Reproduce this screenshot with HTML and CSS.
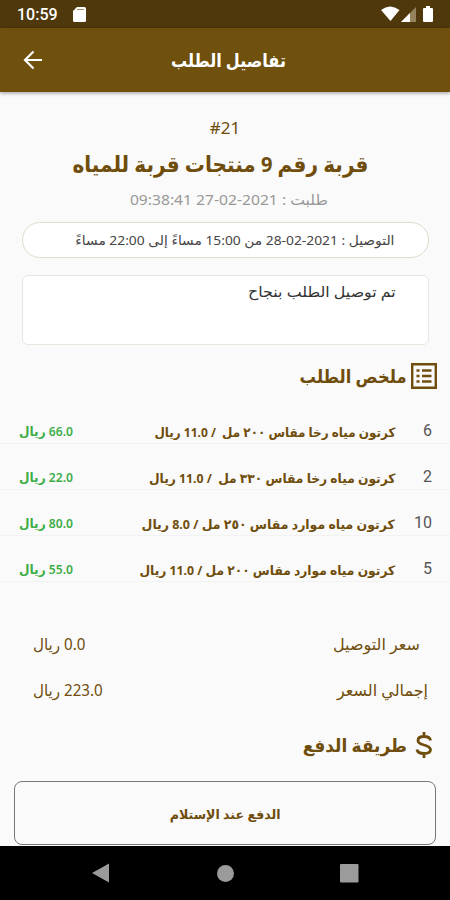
FILE: index.html
```
<!DOCTYPE html>
<html lang="ar" dir="rtl">
<head>
<meta charset="utf-8">
<title>تفاصيل الطلب</title>
<link rel="stylesheet" href="styles.css">
</head>
<body>
<div class="screen">
  <div class="status" dir="ltr">
    <span class="clock">10:59</span>
    <svg class="sd" width="13" height="15" viewBox="0 0 13 15"><path d="M4 0H11.500Q13 0 13 1.500V13.500Q13 15 11.500 15H1.500Q0 15 0 13.500V4Z" fill="#fff"/><path d="M4 2.500h7" stroke="#a2916b"/></svg>
    <svg class="signals" width="54" height="17" viewBox="0 0 54 17"><path d="M0 4Q9 -3 18.500 4L9.500 15Z" fill="#fff"/><path d="M20 16 35 1V16Z" fill="#94835d"/><path d="M20 16 29 7V16Z" fill="#fff"/><path d="M42 3Q42 2 43 2H45V0H49V2H51Q52 2 52 3V15Q52 16 51 16H43Q42 16 42 15Z" fill="#fff"/></svg>
  </div>
  <header class="appbar" dir="ltr">
    <svg class="back" width="20" height="20" viewBox="0 0 20 20" fill="none" stroke="#fff" stroke-width="2.200"><path d="M19 10H2M10.500 1.500 2 10l8.500 8.500"/></svg>
    <h1 class="t" dir="rtl">تفاصيل الطلب</h1>
  </header>
  <main>
    <div class="num"><span class="t" dir="ltr">#21</span></div>
    <h2 class="name"><span class="t">قربة رقم 9 منتجات قربة للمياه</span></h2>
    <div class="date"><span class="t">طلبت : 2021-02-27 09:38:41</span></div>
    <div class="pill"><span class="t">التوصيل : 2021-02-28 من 15:00 مساءً إلى 22:00 مساءً</span></div>
    <div class="note"><span class="t">تم توصيل الطلب بنجاح</span></div>
    <h3 class="section"><svg width="26" height="26" viewBox="0 0 26 26" fill="none" stroke="#6f4d0c" stroke-width="2.400"><path d="M1.200 1.200h23.600v23.600H1.200ZM5.500 7.500h3M5.500 13h3M5.500 18.500h3M11 7.500h9.500M11 13h9.500M11 18.500h9.500"/></svg><span class="t">ملخص الطلب</span></h3>
    <div class="items">
      <div class="item"><span class="qty">6</span><span class="t desc snug">كرتون مياه رخا مقاس ٢٠٠ مل &nbsp;/ 11.0 ريال</span><span class="t price">66.0 ريال</span></div>
      <div class="item"><span class="qty">2</span><span class="t desc">كرتون مياه رخا مقاس ٣٣٠ مل &nbsp;/ 11.0 ريال</span><span class="t price">22.0 ريال</span></div>
      <div class="item"><span class="qty">10</span><span class="t desc wide">كرتون مياه موارد مقاس ٢٥٠ مل / 8.0 ريال</span><span class="t price">80.0 ريال</span></div>
      <div class="item"><span class="qty">5</span><span class="t desc">كرتون مياه موارد مقاس ٢٠٠ مل / 11.0 ريال</span><span class="t price">55.0 ريال</span></div>
    </div>
    <div class="sum ship"><span class="t">سعر التوصيل</span><span class="t amount">0.0 ريال</span></div>
    <div class="sum"><span class="t">إجمالي السعر</span><span class="t amount">223.0 ريال</span></div>
    <h3 class="section pay"><svg width="18" height="26" viewBox="0 0 18 26" fill="none" stroke="#6f4d0c" stroke-width="2.800"><path d="M15.500 8.500Q15 4.500 9 4.500T3 8.500Q3 11.500 9 13T15.500 17.500Q15.500 21.500 9 21.500T2 17.500M9 0V5M9 21V26"/></svg><span class="t">طريقة الدفع</span></h3>
    <div class="method"><span class="t">الدفع عند الإستلام</span></div>
  </main>
  <nav class="nav" dir="ltr"><svg width="450" height="54" viewBox="0 0 450 54" fill="#9b9b9b"><path d="M92 27 109 17.500V36.500Z"/><circle cx="225.500" cy="27.500" r="8.500"/><rect x="340" y="18" width="18.500" height="18.500" rx="1"/></svg></nav>
</div>
</body>
</html>
```
FILE: styles.css
```
* { box-sizing: border-box; }
body { margin: 0; background: #fafafa; font-family: "Noto Sans", "DejaVu Sans", sans-serif; color: #6f4d0c; }
h1, h2, h3 { margin: 0; }
.t { display: inline-block; white-space: pre; flex: none; transform-origin: right center; }
.screen { width: 450px; height: 900px; overflow: hidden; display: flex; flex-direction: column; background: #fafafa; }
.status { height: 28px; background: #4f390c; display: flex; align-items: center; padding: 0 15px 0 17px; flex: none; }
.clock { font: 500 16px Roboto, sans-serif; color: #fff; }
.sd { margin-left: 15px; }
.signals { margin-left: auto; }
.appbar { height: 64px; flex: none; background: #6f500c; color: #fff; display: grid; grid-template-columns: 1fr auto 1fr; align-items: center; padding: 0 17px 0 23px; box-shadow: 0 1px 4px #0006; }
.appbar h1 { font-size: 18px; transform-origin: center; transform: scaleX(.893); }
main { flex: 1; display: flex; flex-direction: column; overflow: hidden; padding-top: 24px; }
main > * { flex: none; }
.num, .name, .date { text-align: center; }
.num { font-size: 17px; line-height: 24px; }
.name { font-size: 22px; line-height: 46px; padding-left: 0; padding-right: 10px; }
.name .t { transform-origin: center; transform: scaleX(.911); }
.date { font-size: 15px; line-height: 22px; margin-top: 2px; padding-left: 8px; color: #999; }
.date .t { transform-origin: center; transform: scaleX(1.043); }
.pill { margin: 12px 21px 0 22px; height: 36px; border: 1px solid #dedccb; border-radius: 18px; background: #fff; line-height: 35px; padding-right: 34px; font-size: 13px; color: #444; }
.pill .t { transform: scaleX(1.062); }
.note { margin: 17px 21px 0 22px; height: 70px; border: 1px solid #e6e6de; border-radius: 6px; background: #fff; padding-right: 32px; font-size: 15px; line-height: 30px; color: #333; }
.note .t { transform: scaleX(1.057); }
.section { display: flex; align-items: center; height: 26px; margin: 18px 13px 0; gap: 4px; font-size: 18px; }
.section .t { transform: scaleX(.91); }
.items { margin-top: 9px; }
.item { height: 46px; display: flex; border-bottom: 1px solid #f2f2f2; align-items: center; padding: 20px 18px 0 19px; font-size: 13px; }
.qty { width: 37px; font: 16px Roboto, sans-serif; color: #555; }
.desc { font-weight: 700; position: relative; top: 1px; transform: scaleX(.943); }
.desc.snug { transform: scaleX(.922); }
.desc.wide { transform: scaleX(.96); }
.price { margin-right: auto; color: #3fae49; font-weight: 600; transform-origin: left center; transform: scaleX(.934); }
.sum { display: flex; justify-content: space-between; height: 46px; align-items: center; padding: 0 22px 0 33px; font-size: 16px; }
.sum .amount { transform-origin: left center; transform: scaleX(.945); }
.ship { margin-top: 39px; padding-right: 30px; }
.section.pay { margin-top: 19px; margin-right: 17px; gap: 8px; }
.pay .t { transform: scaleX(.94); }
.method { margin: 23px 14px 0; height: 64px; border: 1px solid #777; border-radius: 8px; display: flex; align-items: center; justify-content: center; font-weight: 700; font-size: 13px; padding-top: 2px; }
.method .t { transform-origin: center; transform: scaleX(.97); }
.nav { height: 54px; flex: none; background: #000; }
.nav svg { display: block; }
```
